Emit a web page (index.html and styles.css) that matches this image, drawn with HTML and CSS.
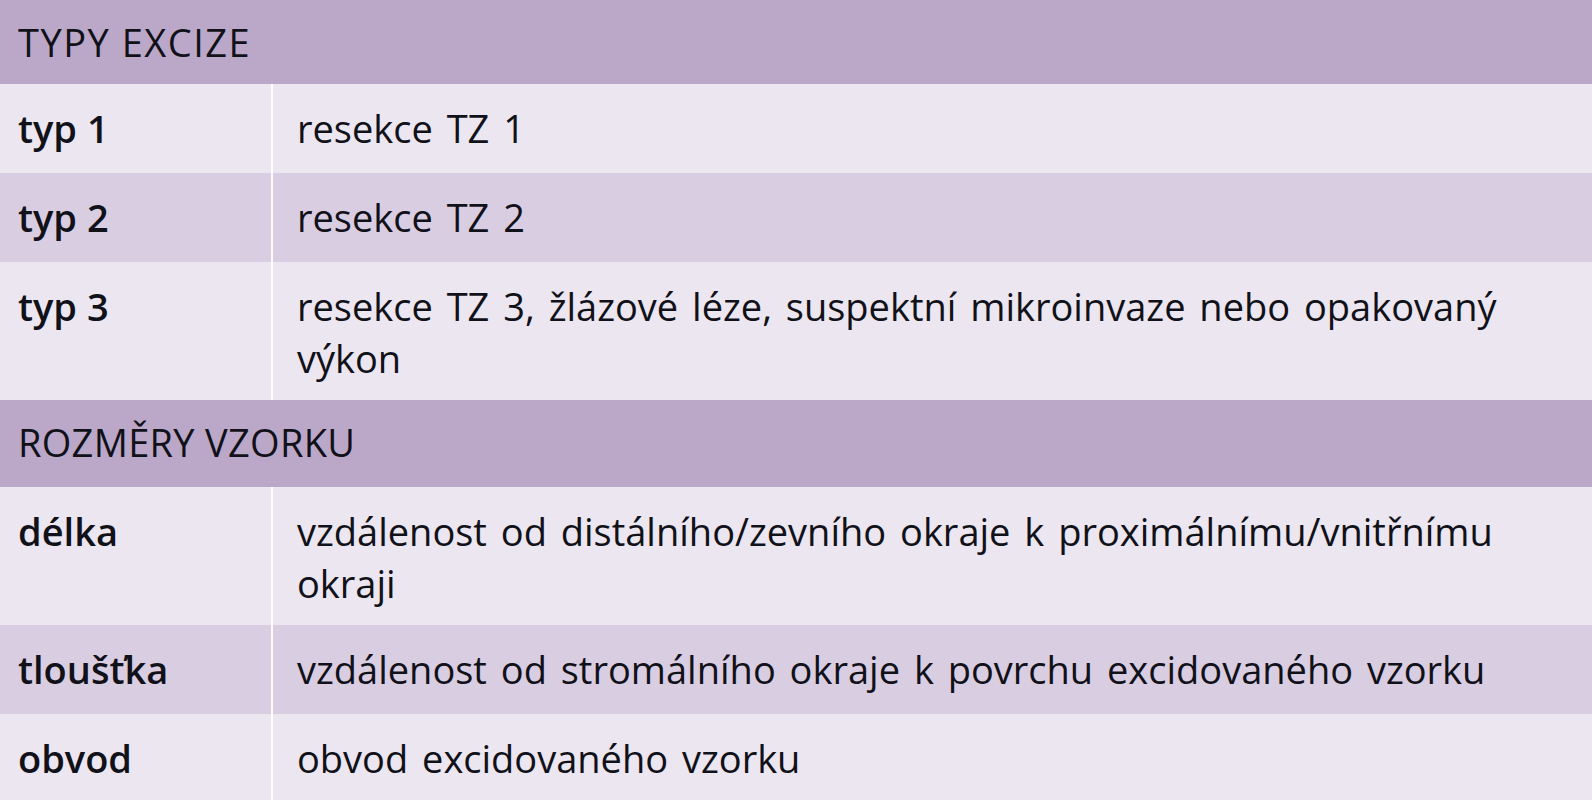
FILE: index.html
```html
<!DOCTYPE html>
<html lang="cs">
<head>
<meta charset="utf-8">
<title>Typy excize</title>
<link rel="stylesheet" href="styles.css">
</head>
<body>
<div class="table">
  <div class="head head1">TYPY EXCIZE</div>
  <div class="row light">
    <div class="label">typ 1</div>
    <div class="value">resekce TZ 1</div>
  </div>
  <div class="row dark">
    <div class="label">typ 2</div>
    <div class="value">resekce TZ 2</div>
  </div>
  <div class="row light two">
    <div class="label">typ 3</div>
    <div class="value">resekce TZ 3, žlázové léze, suspektní mikroinvaze nebo opakovaný výkon</div>
  </div>
  <div class="head head2">ROZMĚRY VZORKU</div>
  <div class="row light two">
    <div class="label">délka</div>
    <div class="value">vzdálenost od distálního/zevního okraje k proximálnímu/vnitřnímu okraji</div>
  </div>
  <div class="row dark">
    <div class="label">tloušťka</div>
    <div class="value">vzdálenost od stromálního okraje k povrchu excidovaného vzorku</div>
  </div>
  <div class="row light last">
    <div class="label">obvod</div>
    <div class="value">obvod excidovaného vzorku</div>
  </div>
</div>
</body>
</html>
```
FILE: styles.css
```css
html, body {
  margin: 0;
  padding: 0;
}
body {
  background: #ebe6ef;
  font-family: "Open Sans", "Noto Sans", sans-serif;
  font-size: 38px;
  line-height: 52px;
  color: #111119;
}
.table {
  width: 1592px;
  display: flex;
  flex-direction: column;
}
.head {
  background: #bba8c8;
  padding: 16px 18px 16px;
  letter-spacing: 0.3px;
}
.head1 {
  letter-spacing: 1.5px;
}
.head2 {
  padding-bottom: 19px;
}
.row {
  display: grid;
  grid-template-columns: 271px 1fr;
}
.light { background: #ebe6ef; }
.dark { background: #d9cde2; }
.label {
  font-weight: 600;
  padding: 18px 18px 19px;
}
.value {
  border-left: 2px solid #ffffff;
  padding: 18px 50px 19px 24px;
  word-spacing: 4px;
}
.two .label, .two .value {
  padding-bottom: 16px;
}
.last .label, .last .value {
  padding-bottom: 16px;
}
```
